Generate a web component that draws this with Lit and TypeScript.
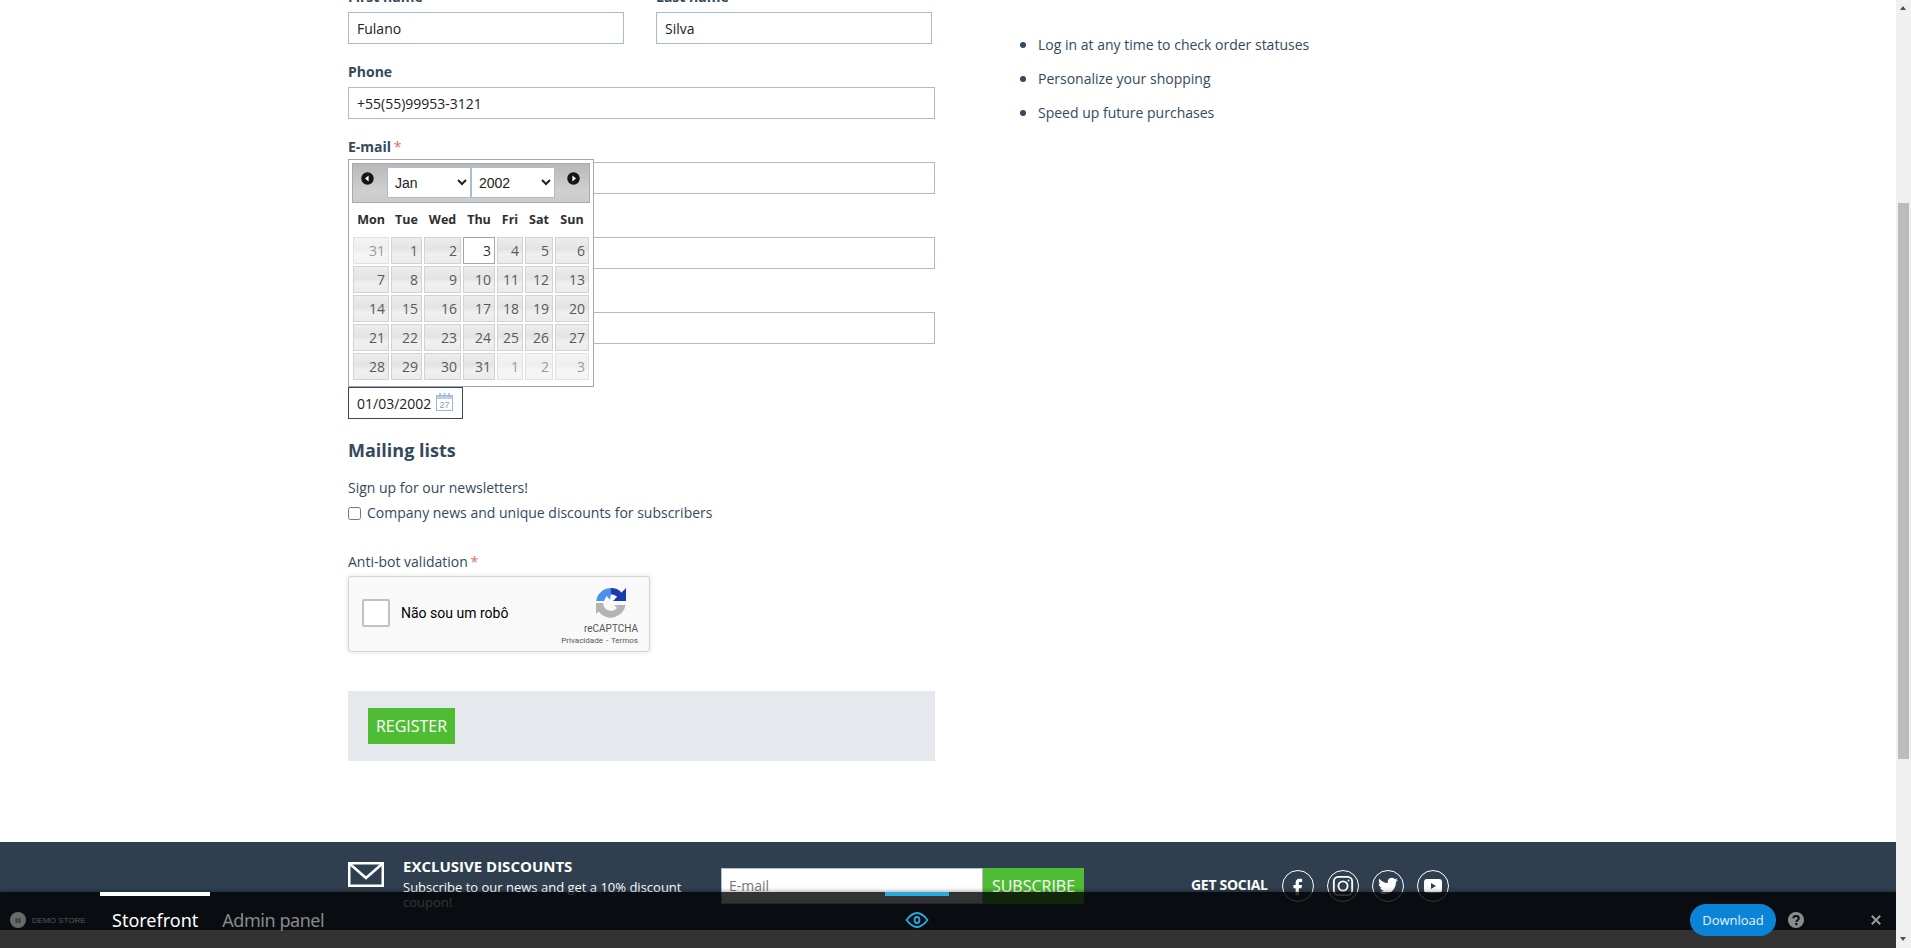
import { LitElement, html, css, svg } from 'lit';
import { customElement } from 'lit/decorators.js';

// column widths of the datepicker table
const COLS = [36, 31, 37, 32, 26, 28, 34];
const DAYS = ['Mon', 'Tue', 'Wed', 'Thu', 'Fri', 'Sat', 'Sun'];
const WEEKS = [
    [31, 1, 2, 3, 4, 5, 6],
    [7, 8, 9, 10, 11, 12, 13],
    [14, 15, 16, 17, 18, 19, 20],
    [21, 22, 23, 24, 25, 26, 27],
    [28, 29, 30, 31, 1, 2, 3],
];

@customElement('date-picker')
export class DatePicker extends LitElement {
    static styles = css`
        :host {
            display: block;
            box-sizing: border-box;
            width: 246px;
            height: 228px;
            padding: 3px;
            background: #fff;
            border: 1px solid #a6a6a6;
            font-family: "Open Sans", sans-serif;
        }
        .head {
            box-sizing: border-box;
            height: 40px;
            display: flex;
            align-items: flex-start;
            padding-top: 3px;
            background: linear-gradient(#b9b9b9, #cfcfcf 70%, #cbcbcb);
            border: 1px solid #a9a9a9;
        }
        .nav {
            box-sizing: border-box;
            width: 34px;
            height: 20px;
            display: flex;
            align-items: center;
            margin-top: 1px;
        }
        .nav.prev { justify-content: flex-start; padding-left: 8px; }
        .nav.next { justify-content: flex-end; padding-right: 9px; }
        select {
            box-sizing: border-box;
            width: 84px;
            height: 31px;
            padding-left: 3px;
            background-color: #fff;
            border: 1px solid #a9bcd0;
            border-radius: 0;
            color: #222;
            font: 14px "Liberation Sans", sans-serif;
        }
        .grid {
            display: grid;
            gap: 2px;
            margin: 0 0 0 1px;
            width: 236px;
        }
        .dow {
            height: 32px;
            display: flex;
            align-items: center;
            justify-content: center;
            font-size: 12.5px;
            font-weight: 700;
            color: #2e2e2e;
        }
        .cell {
            box-sizing: border-box;
            height: 27px;
            padding-right: 3px;
            text-align: right;
            font-size: 14px;
            line-height: 25px;
            color: #5a5a5a;
            border: 1px solid #d2d2d2;
            background: linear-gradient(#ededed, #e3e3e3 45%, #f0f0f0 65%, #ebebeb);
        }
        .cell.other {
            color: #9a9a9a;
            border-color: #e0e0e0;
            background: linear-gradient(#f4f4f4, #eeeeee 45%, #f6f6f6 65%, #f3f3f3);
        }
        .cell.today {
            color: #333;
            background: #fff;
            border-color: #a6a6a6;
        }
    `;

    private arrow(points: string) {
        return html`<svg width="13" height="13" viewBox="0 0 13 13">
            <circle cx="6.5" cy="6.5" r="6.2" fill="#151515"></circle>
            <polygon points=${points} fill="#fff"></polygon>
        </svg>`;
    }

    render() {
        const template = COLS.map((c) => `${c}px`).join(' ');
        return html`
            <div class="head">
                <div class="nav prev">${this.arrow('7.6,3.6 7.6,9.4 4,6.5')}</div>
                <select><option>Jan</option></select>
                <select><option>2002</option></select>
                <div class="nav next">${this.arrow('5.4,3.6 5.4,9.4 9,6.5')}</div>
            </div>
            <div class="grid" style="grid-template-columns:${template}">
                ${DAYS.map((d) => html`<div class="dow">${d}</div>`)}
                ${WEEKS.map((week, w) => week.map((day, i) => {
                    const other = (w === 0 && i === 0) || (w === 4 && i > 3);
                    const today = w === 0 && i === 3;
                    return html`<div class="cell ${other ? 'other' : ''} ${today ? 'today' : ''}">${day}</div>`;
                }))}
            </div>
        `;
    }
}

@customElement('app-root')
export class AppRoot extends LitElement {
    static styles = css`
        :host {
            display: block;
            position: relative;
            width: 100%;
            height: 948px;
            overflow: hidden;
            background: #fff;
            font-family: "Open Sans", sans-serif;
            font-size: 14px;
            color: #34495e;
        }
        .layout { display: flex; height: 948px; }
        .page {
            position: relative;
            width: 1896px;
            height: 948px;
            overflow: hidden;
        }

        /* scrollbar */
        .scrollbar {
            position: relative;
            width: 15px;
            background: #f0f0f0;
        }
        .scrollbar .up, .scrollbar .down {
            position: absolute;
            left: 4px;
            width: 0;
            height: 0;
            border-left: 3.5px solid transparent;
            border-right: 3.5px solid transparent;
        }
        .scrollbar .up { top: 6px; border-bottom: 4px solid #505050; }
        .scrollbar .down { bottom: 7px; border-top: 4px solid #505050; }
        .thumb {
            position: absolute;
            top: 203px;
            left: 2px;
            width: 11px;
            height: 556px;
            background: #bcbcbc;
        }

        /* main form */
        .wrap { width: 1200px; margin: 0 auto; }
        .content {
            display: flex;
            height: 855px;
            margin-top: -13px;
        }
        .left { width: 587px; position: relative; }
        .right { margin-left: 103px; padding-top: 41px; }
        .right ul { margin: 0; padding: 0; list-style: none; }
        .right li {
            position: relative;
            height: 34px;
            line-height: 34px;
        }
        .right li::before {
            content: "";
            position: absolute;
            left: -18px;
            top: 14px;
            width: 6px;
            height: 6px;
            border-radius: 50%;
            background: #34495e;
        }
        .field { margin-bottom: 18px; }
        .two { display: flex; gap: 32px; }
        .two .field { width: 276px; }
        label, .label {
            display: block;
            height: 20px;
            margin-bottom: 5px;
            line-height: 20px;
            font-weight: 700;
        }
        .req { color: #e8685c; font-weight: 400; margin-left: -1px; }
        input.text {
            box-sizing: border-box;
            display: block;
            width: 100%;
            height: 32px;
            padding: 0 8px;
            border: 1px solid #a9bcd0;
            border-radius: 0;
            outline: none;
            background: #fff;
            color: #222;
            font: 14px "Open Sans", sans-serif;
        }
        .dob { position: relative; width: 115px; height: 32px; }
        .dob input.text { border-color: #34495e; }
        .dob svg { position: absolute; top: 6px; right: 10px; }
        .picker { position: absolute; left: 0; top: 172px; z-index: 2; }
        h3 {
            margin: 19px 0 16px;
            height: 24px;
            line-height: 24px;
            font-size: 18px;
            font-weight: 700;
        }
        .line { height: 20px; line-height: 20px; }
        .check {
            display: flex;
            align-items: center;
            gap: 6px;
            margin-top: 5px;
        }
        .check input {
            width: 13px;
            height: 13px;
            margin: 0;
        }
        .antibot { margin-top: 29px; }

        /* captcha box */
        .captcha {
            box-sizing: border-box;
            position: relative;
            display: flex;
            align-items: center;
            width: 302px;
            height: 76px;
            margin-top: 4px;
            padding: 0 0 2px 13px;
            background: #f9f9f9;
            border: 1px solid #d3d3d3;
            border-radius: 3px;
            box-shadow: 0 0 4px 1px rgba(0, 0, 0, .08);
            font-family: Roboto, sans-serif;
        }
        .captcha .box {
            box-sizing: border-box;
            width: 28px;
            height: 28px;
            background: #fff;
            border: 2px solid #c1c1c1;
            border-radius: 2px;
        }
        .captcha .txt { margin-left: 11px; font-size: 14px; color: #000; }
        .captcha .brand {
            position: absolute;
            top: 11px;
            right: 11px;
            display: flex;
            flex-direction: column;
            align-items: flex-end;
        }
        .brand svg { margin-right: 12px; }
        .brand .name { margin-top: 4px; font-size: 10px; line-height: 13px; color: #555; }
        .brand .terms { font-size: 8px; line-height: 11px; color: #555; white-space: nowrap; word-spacing: 1px; }
        .actions {
            height: 70px;
            margin-top: 39px;
            padding: 17px 20px;
            box-sizing: border-box;
            background: #e5e9ed;
        }
        .btn {
            box-sizing: border-box;
            border: none;
            background: #4fbd33;
            color: #fff;
            font: 16px "Open Sans", sans-serif;
            padding: 0;
        }
        .actions .btn { display: block; width: 87px; height: 36px; }

        /* footer */
        footer {
            height: 88px;
            margin-top: 0;
            background: #2f3f4f;
            color: #fff;
        }
        .foot {
            display: flex;
            align-items: flex-start;
            padding-top: 14px;
        }
        .mail { width: 55px; margin-top: 6px; flex: none; }
        .news { width: 318px; flex: none; }
        .news b { display: block; height: 20px; line-height: 20px; font-size: 15px; }
        .news p { margin: 4px 0 0; font-size: 13px; line-height: 15px; width: 300px; }
        .sub { display: flex; margin-top: 12px; flex: none; }
        .sub input {
            box-sizing: border-box;
            width: 262px;
            height: 36px;
            padding: 0 7px 2px;
            border: 1px solid #a9bcd0;
            border-radius: 0;
            background: #fff;
            font: 14px "Open Sans", sans-serif;
        }
        .sub input::placeholder { color: #777; opacity: 1; }
        .sub .btn { width: 101px; height: 36px; }
        .social {
            display: flex;
            align-items: center;
            margin-left: 107px;
            margin-top: 14px;
        }
        .social span {
            width: 91px;
            margin-top: -3px;
            font-size: 14px;
            font-weight: 700;
            white-space: nowrap;
            letter-spacing: -.3px;
        }
        .social .ico {
            box-sizing: border-box;
            width: 32px;
            height: 32px;
            margin-right: 13px;
            border: 1.5px solid #fff;
            border-radius: 50%;
            display: flex;
            align-items: center;
            justify-content: center;
        }

        /* demo bar, lies over the page */
        .bar {
            position: absolute;
            left: 0;
            right: 0;
            bottom: 0;
            height: 56px;
            display: flex;
            align-items: stretch;
            background: rgba(0, 0, 0, .8);
            box-shadow: 0 0 5px rgba(0, 0, 0, .45);
            z-index: 5;
        }
        .logo {
            width: 100px;
            display: flex;
            align-items: center;
            gap: 6px;
            padding-left: 10px;
            box-sizing: border-box;
            font: 8px "Liberation Sans", sans-serif;
            color: #5a5a5a;
            white-space: nowrap;
        }
        .logo svg { flex: none; }
        .tab {
            box-sizing: border-box;
            padding: 0 12px;
            border-top: 4px solid transparent;
            border-bottom: 4px solid transparent;
            display: flex;
            align-items: center;
            font: 18px "Noto Sans", sans-serif;
            color: #8a8a8a;
        }
        .tab.on { border-top-color: #fff; color: #fff; }
        .tab.off { letter-spacing: -.45px; }
        .eye {
            box-sizing: border-box;
            width: 64px;
            margin-left: 549px;
            border-top: 4px solid #29abe2;
            border-bottom: 4px solid transparent;
            display: flex;
            align-items: center;
            justify-content: center;
        }
        .tools {
            margin-left: auto;
            display: flex;
            align-items: center;
            padding-right: 15px;
        }
        .dl {
            width: 86px;
            height: 32px;
            border-radius: 16px;
            background: #0a84d6;
            color: #e6f2fb;
            text-align: center;
            line-height: 32px;
            font-size: 13px;
        }
        .help { margin-left: 12px; display: block; }
        .close { margin-left: 67px; display: block; }
    `;

    // name is left out where the datepicker covers the label in the reference
    private field(name: string, value = '', req = false) {
        return html`
            <div class="field">
                <label>${name}${req ? html` <span class="req">*</span>` : ''}</label>
                <input class="text" .value=${value} />
            </div>
        `;
    }

    private captchaLogo() {
        return svg`<svg width="30" height="30" viewBox="0 0 30 30">
            <path fill="#1c3aa9" d="M15 0a15 15 0 0 1 10.6 4.4L30 0v13H17l4.200-4.200A8.800 8.800 0 0 0 15 6.200z"></path>
            <path fill="#4a90f0" d="M15 0v6.200l-1 5.200L10.500 8 8 13H.2A15 15 0 0 1 15 0z"></path>
            <path fill="#b4b4b4" d="M0 15h7.200A7.800 7.800 0 0 0 21 20l-3-3h9.600l2-.5A15 15 0 0 1 2.600 23.500L0 26z"></path>
        </svg>`;
    }

    private socialIcon(kind: string) {
        if (kind === 'fb') {
            return svg`<svg width="22" height="22" viewBox="0 0 24 24"><path fill="#fff" d="M14.200 7.600h2.300V4h-2.900c-3 0-4.200 2-4.200 4.400V11H7v3.400h2.400V22h3.500v-7.600h2.900l.5-3.400h-3.400V8.900c0-.8.4-1.300 1.300-1.300z"></path></svg>`;
        }
        if (kind === 'ig') {
            return svg`<svg width="22" height="22" viewBox="0 0 24 24" fill="none" stroke="#fff" stroke-width="2"><rect x="2" y="2" width="20" height="20" rx="5"></rect><circle cx="12" cy="12" r="5"></circle><circle cx="18" cy="6" r="1" fill="#fff" stroke="none"></circle></svg>`;
        }
        if (kind === 'tw') {
            return svg`<svg width="20" height="20" viewBox="0 0 24 24"><path fill="#fff" d="M23.953 4.570a10 10 0 01-2.825.775 4.958 4.958 0 002.163-2.723c-.951.555-2.005.959-3.127 1.184a4.920 4.920 0 00-8.384 4.482C7.690 8.095 4.067 6.130 1.640 3.162a4.822 4.822 0 00-.666 2.475c0 1.710.870 3.213 2.188 4.096a4.904 4.904 0 01-2.228-.616v.06a4.923 4.923 0 003.946 4.827 4.996 4.996 0 01-2.212.085 4.936 4.936 0 004.604 3.417 9.867 9.867 0 01-6.102 2.105c-.390 0-.779-.023-1.170-.067a13.995 13.995 0 007.557 2.209c9.053 0 13.998-7.496 13.998-13.985 0-.210 0-.420-.015-.630A9.935 9.935 0 0024 4.590z"></path></svg>`;
        }
        return svg`<svg width="20" height="16" viewBox="0 0 20 16"><path fill="#fff" fill-rule="evenodd" d="M4 1h12a3 3 0 0 1 3 3v8a3 3 0 0 1-3 3H4a3 3 0 0 1-3-3V4a3 3 0 0 1 3-3zm4 4v6l5-3z"></path></svg>`;
    }

    render() {
        return html`
            <div class="layout">
                <div class="page">
                    <div class="wrap">
                        <div class="content">
                            <div class="left">
                                <div class="two">
                                    ${this.field('First name', 'Fulano')}
                                    ${this.field('Last name', 'Silva')}
                                </div>
                                ${this.field('Phone', '+55(55)99953-3121')}
                                ${this.field('E-mail', '', true)}
                                ${this.field('')}
                                ${this.field('')}
                                <label></label>
                                <div class="dob">
                                    <input class="text" .value=${'01/03/2002'} />
                                    <svg width="17" height="18" viewBox="0 0 17 18">
                                        <rect x=".5" y="2.5" width="16" height="15" fill="#fff" stroke="#9db7d4"></rect>
                                        <rect x="1" y="3" width="15" height="3" fill="#bcd0e6"></rect>
                                        <path d="M4 0v4M8.500 0v4M13 0v4" stroke="#9db7d4" stroke-width="1.500"></path>
                                        <text x="8.500" y="15" text-anchor="middle" font-size="9" font-family="Liberation Sans" fill="#7f9cbd">27</text>
                                    </svg>
                                </div>
                                <date-picker class="picker"></date-picker>
                                <h3>Mailing lists</h3>
                                <div class="line">Sign up for our newsletters!</div>
                                <div class="line check">
                                    <input type="checkbox" />
                                    <span>Company news and unique discounts for subscribers</span>
                                </div>
                                <div class="line antibot">Anti-bot validation <span class="req">*</span></div>
                                <div class="captcha">
                                    <div class="box"></div>
                                    <div class="txt">Não sou um robô</div>
                                    <div class="brand">
                                        ${this.captchaLogo()}
                                        <div class="name">reCAPTCHA</div>
                                        <div class="terms">Privacidade - Termos</div>
                                    </div>
                                </div>
                                <div class="actions"><button class="btn">REGISTER</button></div>
                            </div>
                            <div class="right">
                                <ul>
                                    <li>Log in at any time to check order statuses</li>
                                    <li>Personalize your shopping</li>
                                    <li>Speed up future purchases</li>
                                </ul>
                            </div>
                        </div>
                    </div>
                    <footer>
                        <div class="wrap foot">
                            <svg class="mail" width="36" height="25" viewBox="0 0 36 25" fill="none" stroke="#fff" stroke-width="2.500" preserveAspectRatio="xMinYMid meet">
                                <rect x="1.250" y="1.250" width="33.500" height="22.500"></rect>
                                <path d="M2 2l16 14L34 2"></path>
                            </svg>
                            <div class="news">
                                <b>EXCLUSIVE DISCOUNTS</b>
                                <p>Subscribe to our news and get a 10% discount coupon!</p>
                            </div>
                            <div class="sub">
                                <input placeholder="E-mail" />
                                <button class="btn">SUBSCRIBE</button>
                            </div>
                            <div class="social">
                                <span>GET SOCIAL</span>
                                ${['fb', 'ig', 'tw', 'yt'].map((k) => html`<div class="ico">${this.socialIcon(k)}</div>`)}
                            </div>
                        </div>
                    </footer>
                    <div class="bar">
                        <div class="logo">
                            <svg width="16" height="16" viewBox="0 0 16 16">
                                <circle cx="8" cy="8" r="8" fill="#6a6a6a"></circle>
                                <rect x="5.500" y="6" width="2" height="5" fill="#3a3a3a"></rect>
                                <rect x="8.500" y="6" width="2" height="5" fill="#3a3a3a"></rect>
                            </svg>
                            DEMO STORE
                        </div>
                        <div class="tab on">Storefront</div>
                        <div class="tab off">Admin panel</div>
                        <div class="eye">
                            <svg width="24" height="16" viewBox="0 0 24 16" fill="none" stroke="#29abe2" stroke-width="1.800">
                                <path d="M1.500 8C5 3.500 8 1 12 1s7 2.500 10.500 7C19 12.500 16 15 12 15S5 12.500 1.500 8z"></path>
                                <ellipse cx="12" cy="8" rx="2.500" ry="3"></ellipse>
                            </svg>
                        </div>
                        <div class="tools">
                            <div class="dl">Download</div>
                            <svg class="help" width="16" height="16" viewBox="0 0 16 16">
                                <circle cx="8" cy="8" r="8" fill="#8c8c8c"></circle>
                                <path d="M5.300 6.200C5.400 4.700 6.500 4 8 4c1.600 0 2.800.9 2.800 2.300 0 2-2.500 1.900-2.500 3.700" fill="none" stroke="#0a0d10" stroke-width="2"></path>
                                <rect x="7.200" y="11" width="2.200" height="2.200" fill="#0a0d10"></rect>
                            </svg>
                            <svg class="close" width="10" height="10" viewBox="0 0 10 10">
                                <path d="M.8.8l8.400 8.400M9.200.8L.8 9.200" stroke="#9a9a9a" stroke-width="2"></path>
                            </svg>
                        </div>
                    </div>
                </div>
                <div class="scrollbar">
                    <div class="up"></div>
                    <div class="thumb"></div>
                    <div class="down"></div>
                </div>
            </div>
        `;
    }
}

declare global {
    interface HTMLElementTagNameMap {
        'app-root': AppRoot;
        'date-picker': DatePicker;
    }
}
